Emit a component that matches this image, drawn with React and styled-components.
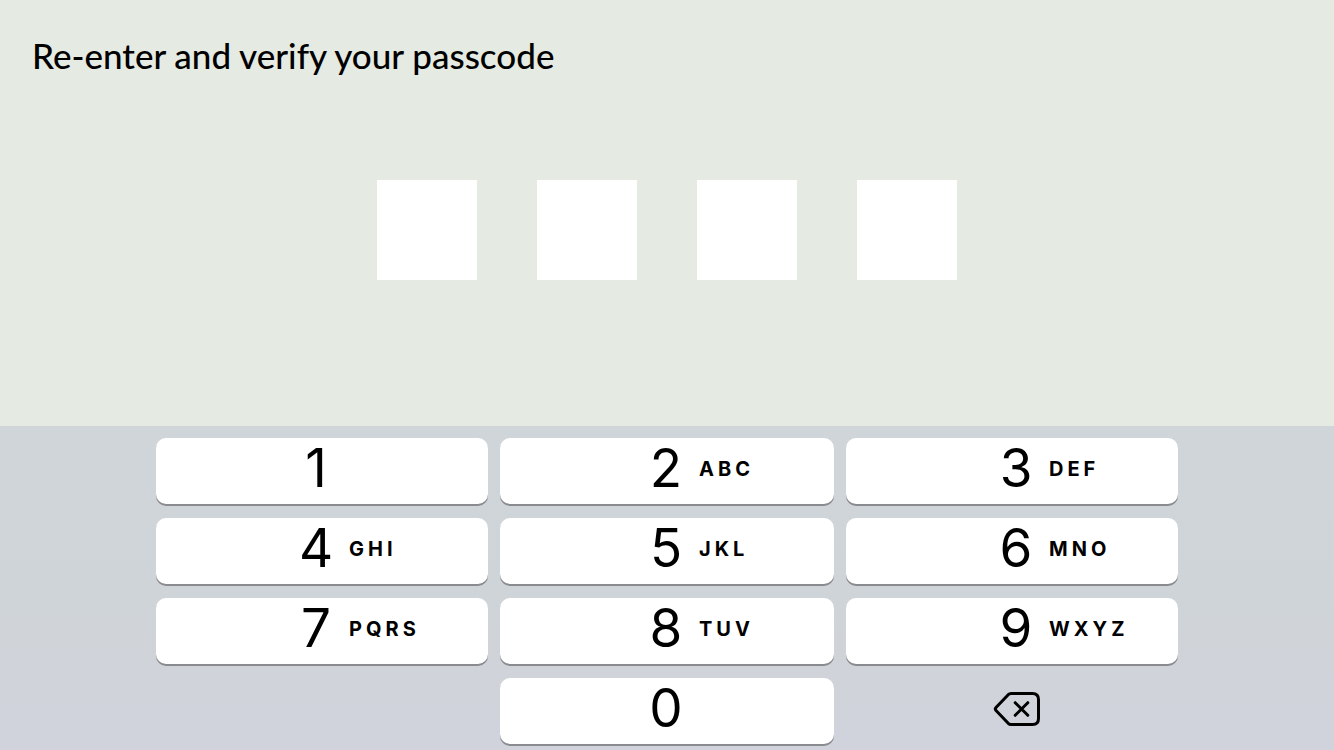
import React, { useState } from 'react'
import styled, { createGlobalStyle } from 'styled-components'

const GlobalStyle = createGlobalStyle`
  * {
    box-sizing: border-box;
  }

  body {
    margin: 0;
    background: #e5eae2;
    color: #000;
  }
`

const Page = styled.div`
  display: flex;
  flex-direction: column;
  min-height: 100vh;
`

const Main = styled.main`
  flex: 1;
  padding: 32px;
`

const Title = styled.h1`
  margin: 0;
  font-family: Lato, sans-serif;
  font-size: 35px;
  font-weight: 500;
  line-height: 46px;
`

const CodeRow = styled.div`
  display: flex;
  justify-content: center;
  gap: 60px;
  margin-top: 102px;
`

const CodeInput = styled.input`
  width: 100px;
  height: 100px;
  padding: 0;
  border: 0;
  border-radius: 0;
  background: #fff;
  font-family: Inter, sans-serif;
  font-size: 52px;
  text-align: center;
  outline: none;
`

const Keyboard = styled.div`
  display: grid;
  grid-template-columns: 332fr 334fr 332fr;
  gap: 14px 12px;
  padding: 12px 156px 6px;
  background: linear-gradient(#cfd5d9 0%, #cfd4d8 55%, #d0d3d9 78%, #d0d3dc 100%);
`

const labelPadding = {
  left: '0 12px 6px 0',
  center: '0 2px 6px 0',
  right: '0 0 6px 8px',
}

const Key = styled.button`
  display: grid;
  grid-template-columns: 1fr 34px 1fr;
  align-items: center;
  column-gap: 16px;
  height: 66px;
  padding: ${({ $column }) => labelPadding[$column]};
  border: 0;
  border-radius: 10px;
  background: #fff;
  box-shadow: 0 2px 0 #898b8f;
  color: #000;
  font-family: Inter, sans-serif;
  cursor: pointer;
`

const Digit = styled.span`
  grid-column: 2;
  font-size: 53px;
  line-height: 56px;
  text-align: center;
`

const Letters = styled.span`
  padding-top: 2px;
  font-size: 20px;
  font-weight: 700;
  line-height: 24px;
  letter-spacing: 4px;
  text-align: left;
`

const DeleteKey = styled.button`
  grid-column: 3;
  display: flex;
  align-items: center;
  justify-content: center;
  height: 66px;
  padding: 0 0 4px 10px;
  border: 0;
  background: transparent;
  color: #000;
  cursor: pointer;
`

const keys = [
  { digit: '1', column: 'left' },
  { digit: '2', letters: 'ABC', column: 'center' },
  { digit: '3', letters: 'DEF', column: 'right' },
  { digit: '4', letters: 'GHI', column: 'left' },
  { digit: '5', letters: 'JKL', column: 'center' },
  { digit: '6', letters: 'MNO', column: 'right' },
  { digit: '7', letters: 'PQRS', column: 'left' },
  { digit: '8', letters: 'TUV', column: 'center' },
  { digit: '9', letters: 'WXYZ', column: 'right' },
]

const DeleteIcon = () => (
  <svg width="48" height="36" viewBox="0 0 48 36" fill="none" stroke="currentColor" strokeWidth="3" strokeLinecap="round" strokeLinejoin="round" aria-hidden="true">
    <path d="M18 2.5H39.5Q45.5 2.5 45.5 8.5V27.5Q45.5 33.5 39.5 33.5H18Q16.5 33.5 15.2 32.3L3 19.5Q1.6 18 3 16.5L15.2 3.7Q16.5 2.5 18 2.5Z" />
    <path d="M22.2 11.7L34.8 24.3M34.8 11.7L22.2 24.3" />
  </svg>
)

const App = () => {
  const [code, setCode] = useState('')

  const addDigit = (digit) => setCode((prev) => (prev + digit).slice(0, 4))
  const removeDigit = () => setCode((prev) => prev.slice(0, -1))

  return (
    <Page>
      <GlobalStyle />
      <Main>
        <Title>Re-enter and verify your passcode</Title>
        <CodeRow>
          {[0, 1, 2, 3].map((index) => (
            <CodeInput
              key={index}
              type="password"
              aria-label={`Passcode digit ${index + 1}`}
              value={code[index] || ''}
              readOnly
            />
          ))}
        </CodeRow>
      </Main>
      <Keyboard>
        {keys.map(({ digit, letters, column }) => (
          <Key key={digit} type="button" $column={column} onClick={() => addDigit(digit)}>
            <Digit>{digit}</Digit>
            {letters ? <Letters>{letters}</Letters> : null}
          </Key>
        ))}
        <span />
        <Key type="button" $column="center" onClick={() => addDigit('0')}>
          <Digit>0</Digit>
        </Key>
        <DeleteKey type="button" aria-label="Delete" onClick={removeDigit}>
          <DeleteIcon />
        </DeleteKey>
      </Keyboard>
    </Page>
  )
}

export default App
